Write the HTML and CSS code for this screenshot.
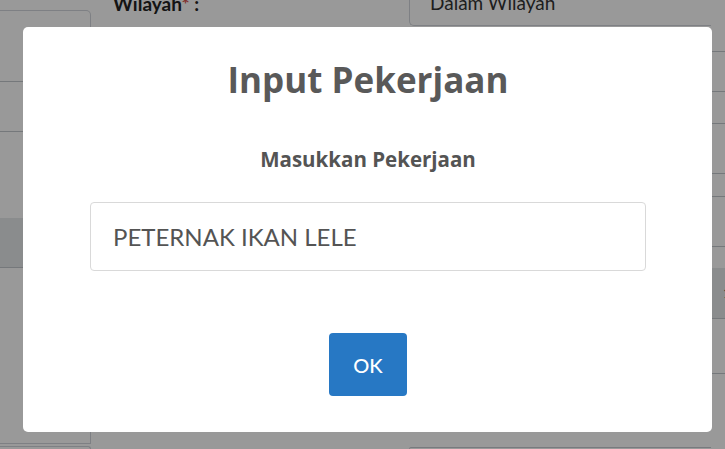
FILE: index.html
```html
<!DOCTYPE html>
<html lang="id">
<head>
<meta charset="utf-8">
<title>Input Pekerjaan</title>
<link rel="stylesheet" href="styles.css">
</head>
<body>
<div class="page">
  <aside class="side">
    <div class="side-box">
      <div class="side-row r1"></div>
      <div class="side-row r2"></div>
      <div class="side-row r3"></div>
      <div class="side-row band"></div>
      <div class="side-row r5"></div>
    </div>
    <div class="side-box next"></div>
  </aside>
  <main class="form">
    <div class="form-row top">
      <label class="form-label">Wilayah<span class="req">*</span> :</label>
      <div class="form-input">Dalam Wilayah</div>
    </div>
    <div class="form-row bottom">
      <div class="spacer"></div>
      <div class="form-input next"></div>
    </div>
  </main>
  <aside class="table">
    <div class="t-row h40"></div>
    <div class="t-row h32"></div>
    <div class="t-row h50"></div>
    <div class="t-row h23"></div>
    <div class="t-row h50"></div>
    <div class="t-row h22"></div>
    <div class="t-row band h50"><span class="t-text">1</span></div>
    <div class="t-row h55"></div>
    <div class="t-row h67"></div>
  </aside>
</div>

<div class="overlay">
  <div class="modal" role="dialog">
    <h2 class="modal-title">Input Pekerjaan</h2>
    <label class="modal-label" for="job">Masukkan Pekerjaan</label>
    <input class="modal-input" id="job" type="text" value="PETERNAK IKAN LELE">
    <div class="modal-actions">
      <button class="modal-btn" type="button">OK</button>
    </div>
  </div>
</div>
</body>
</html>
```

FILE: styles.css
```css
* { box-sizing: border-box; }

html, body {
  margin: 0;
  padding: 0;
  width: 725px;
  height: 449px;
  overflow: hidden;
  background: #ffffff;
  font-family: "Lato", "Liberation Sans", sans-serif;
}

/* ---------- underlying page ---------- */
.page {
  display: flex;
  height: 449px;
}

.side {
  width: 91px;
  flex: none;
  display: flex;
  flex-direction: column;
  padding-top: 10px;
}

.side-box {
  border: 1px solid #d2d6dc;
  border-left: none;
  border-radius: 0 5px 0 0;
  flex: 1;
  display: flex;
  flex-direction: column;
  padding-top: 48px;
}

.side-row { border-bottom: 1px solid #c4c8cd; }
.side-row.r1 { height: 23px; }
.side-row.r2 { height: 50px; }
.side-row.r3 { height: 86px; border-bottom: none; }
.side-row.band { height: 50px; background: #e6e9ec; }
.side-row.r5 { border: none; }

.side-box.next {
  flex: none;
  margin-top: 2px;
  height: 3px;
  padding: 0;
  border-bottom: none;
}

.form {
  flex: 1;
  display: flex;
  flex-direction: column;
  justify-content: space-between;
  padding-left: 22px;
}

.form-row {
  display: flex;
  align-items: flex-start;
}

.form-row.top { margin-top: -4px; }

.form-label {
  width: 296px;
  font-weight: 700;
  font-size: 19px;
  line-height: 20px;
  margin-top: -2px;
  color: #222;
}

.req { color: #d9534f; }

.form-input {
  flex: 1;
  height: 30px;
  border: 1px solid #d2d6dc;
  border-top: none;
  border-right: none;
  border-radius: 0 0 0 5px;
  padding: 0 20px;
  font-size: 19px;
  line-height: 14px;
  overflow: hidden;
  color: #333;
}

.spacer { width: 296px; }
.form-input.next {
  height: 2px;
  border-top: 1px solid #c8ccd2;
  border-bottom: none;
  border-radius: 5px 0 0 0;
}

.table {
  width: 14px;
  flex: none;
  display: flex;
  flex-direction: column;
  padding-top: 51px;
}

.t-row { border-top: 1px solid #c4c8cd; }
.t-row.h40 { height: 40px; }
.t-row.h32 { height: 32px; }
.t-row.h50 { height: 50px; }
.t-row.h23 { height: 23px; }
.t-row.h22 { height: 22px; }
.t-row.h55 { height: 55px; }
.t-row.h67 { height: 67px; }
.t-row.band { background: #e6e9ec; border-top: none; position: relative; }
.t-text {
  position: absolute;
  left: 12px;
  top: 16px;
  font-size: 14px;
  color: #555;
}

/* ---------- overlay + modal ---------- */
.overlay {
  position: fixed;
  inset: 0;
  background: rgba(0, 0, 0, 0.4);
  display: flex;
  align-items: flex-start;
  justify-content: flex-start;
  padding: 27px 0 0 23px;
}

.modal {
  width: 689px;
  height: 405px;
  background: #ffffff;
  border-radius: 5px;
  display: flex;
  flex-direction: column;
  align-items: center;
  padding: 33px 66px 0 67px;
  font-family: "Open Sans", "Noto Sans", sans-serif;
}

.modal-title {
  margin: 0;
  font-size: 35px;
  line-height: 40px;
  font-weight: 700;
  color: #595959;
  text-align: center;
}

.modal-label {
  margin-top: 47px;
  font-size: 20.5px;
  line-height: 24px;
  font-weight: 700;
  color: #545454;
}

.modal-input {
  margin-top: 31px;
  width: 100%;
  height: 69px;
  border: 1px solid #d9d9d9;
  border-radius: 4px;
  padding: 0 22px;
  font-family: "Lato", sans-serif;
  font-size: 24px;
  color: #545454;
  background: #fff;
  outline: none;
}

.modal-actions {
  margin-top: 62px;
  display: flex;
  justify-content: center;
}

.modal-btn {
  width: 78px;
  height: 63px;
  border: none;
  border-radius: 4px;
  background: #2778c4;
  color: #ffffff;
  font-family: "Lato", sans-serif;
  font-size: 20px;
  font-weight: 500;
  padding: 0;
}
```
